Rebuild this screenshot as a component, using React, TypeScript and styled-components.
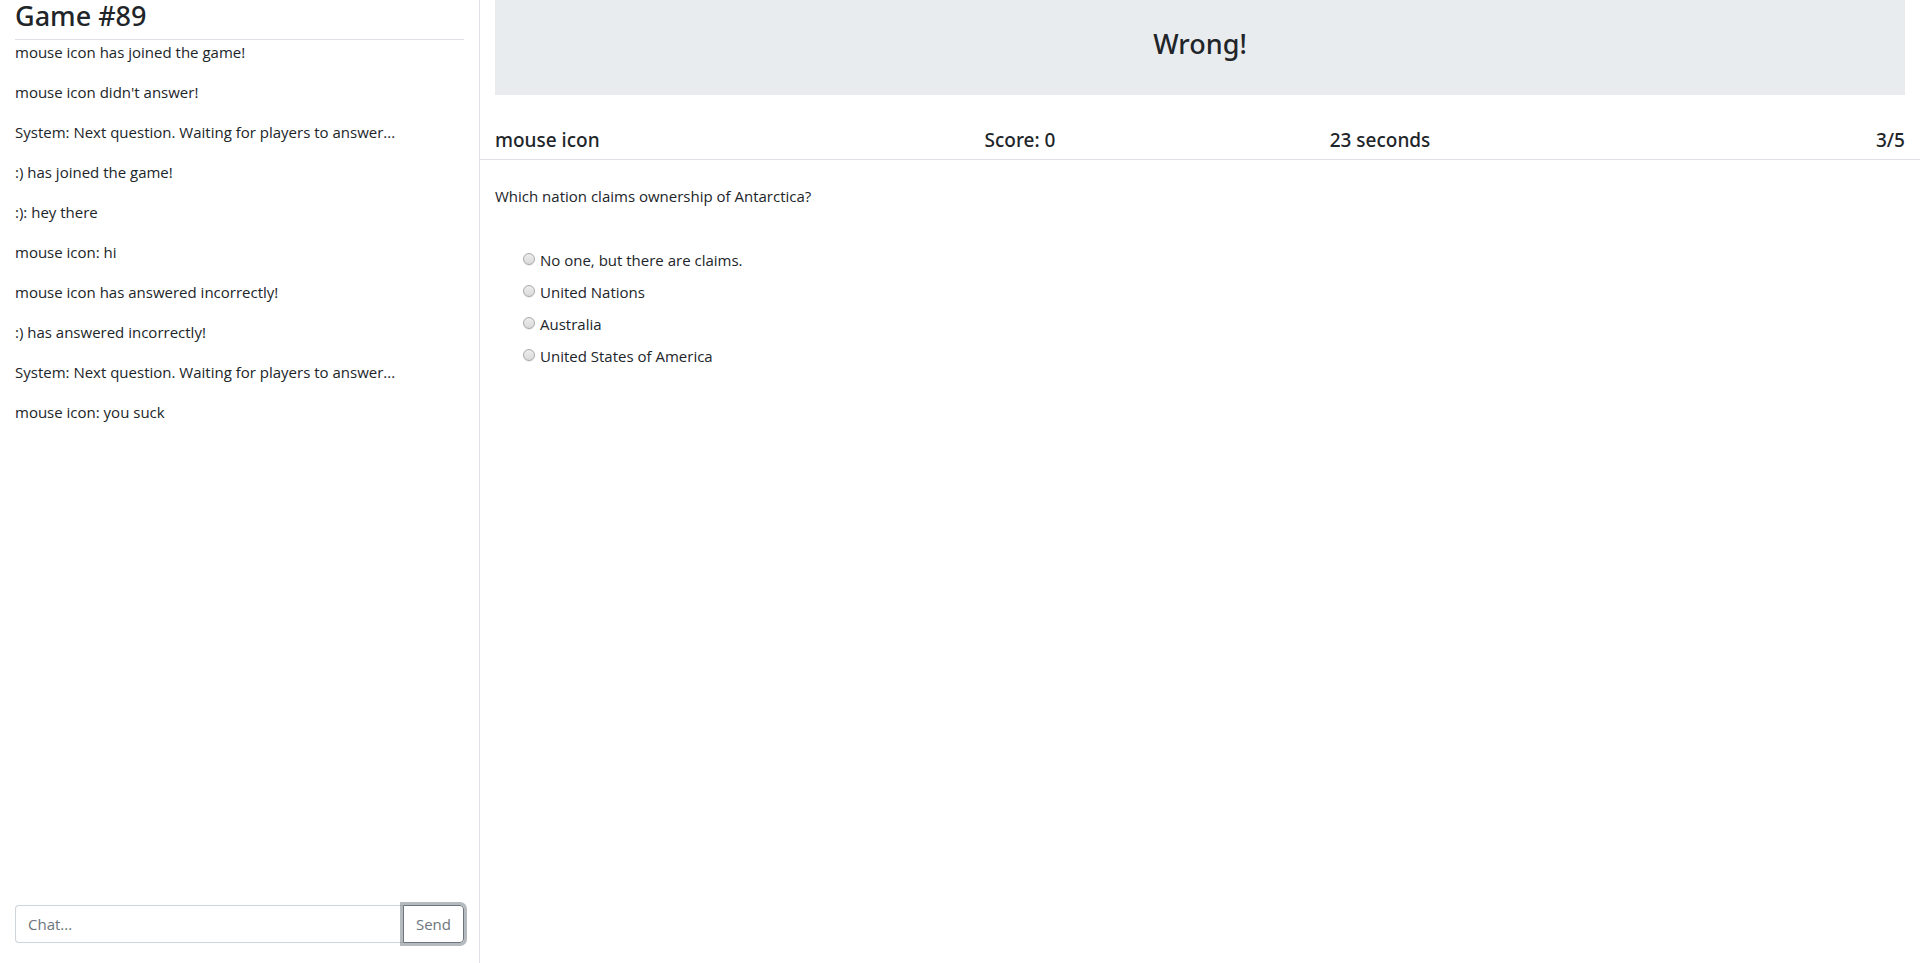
import React, { useState } from "react";
import styled, { createGlobalStyle } from "styled-components";

const GlobalStyle = createGlobalStyle`
  *, *::before, *::after { box-sizing: border-box; }
  body {
    margin: 0;
    background: #fff;
    color: #212529;
    font-family: "Segoe UI", "Open Sans", "Noto Sans", sans-serif;
    font-size: 15px;
    line-height: 24px;
  }
  h1, h2, h3 {
    font-family: "Segoe UI", "Noto Sans", sans-serif;
    font-weight: 500;
  }
`;

const Page = styled.div`
  display: flex;
  min-height: 100vh;
`;

const Sidebar = styled.aside`
  flex: 0 0 25%;
  display: flex;
  flex-direction: column;
  padding: 0 15px 20px;
  border-right: 1px solid #dee2e6;
`;

const GameTitle = styled.h1`
  margin: 0;
  padding-bottom: 7px;
  border-bottom: 1px solid #dee2e6;
  font-size: 27px;
  line-height: 32px;
`;

const Messages = styled.div`
  flex: 1;
`;

const Message = styled.p`
  margin: 0 0 16px;
`;

const ChatForm = styled.form`
  display: flex;
`;

const ChatInput = styled.input`
  flex: 1;
  min-width: 0;
  height: 38px;
  padding: 6px 12px;
  border: 1px solid #ced4da;
  border-right: 0;
  border-radius: 4px 0 0 4px;
  font: inherit;
  color: #495057;
  &::placeholder { color: #6c757d; opacity: 1; }
`;

const SendButton = styled.button`
  height: 38px;
  padding: 0 12px;
  border: 1px solid #6c757d;
  border-radius: 0 4px 4px 0;
  background: transparent;
  color: #6c757d;
  font: inherit;
  box-shadow: 0 0 0 3px rgba(108, 117, 125, 0.5);
`;

const Main = styled.main`
  flex: 1;
  min-width: 0;
`;

const Banner = styled.div`
  margin: 0 15px 32px;
  padding: 28px 32px 35px;
  background: #e9ecef;
  text-align: center;
`;

const BannerText = styled.h2`
  margin: 0;
  font-size: 27px;
  line-height: 32px;
`;

const StatusRow = styled.div`
  display: grid;
  grid-template-columns: repeat(4, 1fr);
  padding: 1px 0 7px;
  border-bottom: 1px solid #dee2e6;
`;

const Status = styled.h3<{ $align?: "left" | "center" | "right" }>`
  margin: 0;
  padding: 0 15px;
  font-size: 19px;
  line-height: 24px;
  text-align: ${(p) => p.$align ?? "left"};
`;

const Question = styled.fieldset`
  margin: 0;
  padding: 24px 15px;
  border: 0;
`;

const QuestionText = styled.legend`
  float: left;
  width: 100%;
  margin-bottom: 40px;
  padding: 0;
`;

const Options = styled.div`
  clear: both;
  display: flex;
  flex-direction: column;
  align-items: flex-start;
  gap: 8px;
  padding-left: 28px;
`;

const Option = styled.label`
  display: flex;
  gap: 5px;
`;

const Radio = styled.input`
  appearance: none;
  width: 12px;
  height: 12px;
  margin: 5px 0 0;
  border: 1px solid #a9a9a9;
  border-radius: 50%;
  background: linear-gradient(#ededed, #dadada);
  box-shadow: 0 1px 1px #ececec;
  &:checked { background: radial-gradient(#555 3px, #e2e2e2 4px); }
`;

const messages = [
  "mouse icon has joined the game!",
  "mouse icon didn't answer!",
  "System: Next question. Waiting for players to answer...",
  ":) has joined the game!",
  ":): hey there",
  "mouse icon: hi",
  "mouse icon has answered incorrectly!",
  ":) has answered incorrectly!",
  "System: Next question. Waiting for players to answer...",
  "mouse icon: you suck",
];

const answers = [
  "No one, but there are claims.",
  "United Nations",
  "Australia",
  "United States of America",
];

export default function App() {
  const [answer, setAnswer] = useState<string | null>(null);
  const [draft, setDraft] = useState("");
  return (
    <>
      <GlobalStyle />
      <Page>
        <Sidebar>
          <GameTitle>Game #89</GameTitle>
          <Messages>
            {messages.map((text, i) => (
              <Message key={i}>{text}</Message>
            ))}
          </Messages>
          <ChatForm onSubmit={(e) => { e.preventDefault(); setDraft(""); }}>
            <ChatInput
              type="text"
              aria-label="Chat"
              placeholder="Chat..."
              value={draft}
              onChange={(e) => setDraft(e.target.value)}
            />
            <SendButton type="submit">Send</SendButton>
          </ChatForm>
        </Sidebar>
        <Main>
          <Banner>
            <BannerText>Wrong!</BannerText>
          </Banner>
          <StatusRow>
            <Status>mouse icon</Status>
            <Status $align="center">Score: 0</Status>
            <Status $align="center">23 seconds</Status>
            <Status $align="right">3/5</Status>
          </StatusRow>
          <Question>
            <QuestionText>Which nation claims ownership of Antarctica?</QuestionText>
            <Options>
              {answers.map((text) => (
                <Option key={text}>
                  <Radio
                    type="radio"
                    name="answer"
                    checked={answer === text}
                    onChange={() => setAnswer(text)}
                  />
                  {text}
                </Option>
              ))}
            </Options>
          </Question>
        </Main>
      </Page>
    </>
  );
}
